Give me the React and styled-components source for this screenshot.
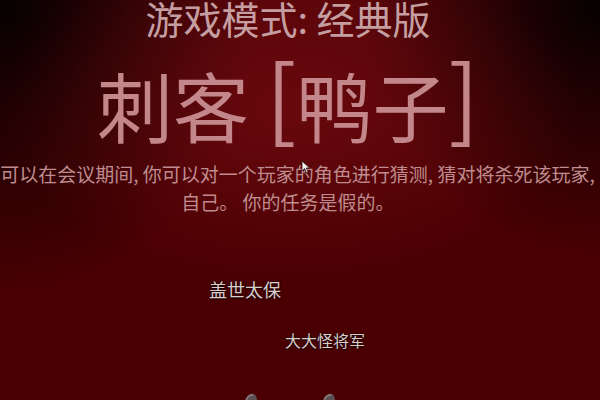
import React from 'react';
import styled, { createGlobalStyle } from 'styled-components';

const GlobalStyle = createGlobalStyle`
  html, body {
    margin: 0;
    padding: 0;
    background: #000;
  }
  body {
    font-family: "Noto Sans CJK SC", "Noto Sans", sans-serif;
  }
`;

const players = [
  { name: '盖世太保', x: 209, y: 279, size: 18 },
  { name: '大大怪将军', x: 285, y: 331, size: 16 },
];

const figures = [
  { x: 244, y: 393 },
  { x: 322, y: 393 },
];

const App = () => {
  return (
    <>
      <GlobalStyle />
      <Screen>
        <Header>
          <ModeTitle>游戏模式: 经典版</ModeTitle>
          <RoleTitle>
            <span>刺客</span>
            <Gap />
            <Bracket>[</Bracket>
            <span>鸭子</span>
            <Bracket>]</Bracket>
          </RoleTitle>
          <Blurb>
            <BlurbLine>你可以在会议期间, 你可以对一个玩家的角色进行猜测, 猜对将杀死该玩家,</BlurbLine>
            <BlurbLine>自己。 你的任务是假的。</BlurbLine>
          </Blurb>
        </Header>

        <Stage>
          {players.map((p) => (
            <NameTag key={p.name} x={p.x} y={p.y} size={p.size}>
              {p.name}
            </NameTag>
          ))}
          {figures.map((f, i) => (
            <Figure key={i} x={f.x} y={f.y} viewBox="0 0 14 8" width="14" height="8">
              <path d="M1 8 C2 3 6 0 10 1 C12 2 13 5 13 8 Z" fill="#5e4f52" />
              <path d="M2 8 C3 4 6 2 9 2" stroke="#8d7e80" strokeWidth="1.4" fill="none" />
            </Figure>
          ))}
        </Stage>

        <Pointer viewBox="0 0 10 14" width="10" height="14">
          <path d="M1 1 L1 11 L3.6 8.6 L5.6 13 L7.2 12.3 L5.2 8 L8.6 8 Z" fill="#f4f0f0" stroke="#2a1a1a" strokeWidth="0.8" />
        </Pointer>
      </Screen>
    </>
  );
};

const Screen = styled.div`
  position: relative;
  width: 600px;
  height: 400px;
  overflow: hidden;
  display: flex;
  flex-direction: column;
  background-color: #4a0003;
  background-image:
    radial-gradient(ellipse 290px 170px at 290px 110px, rgba(125, 14, 20, 0.55), rgba(125, 14, 20, 0) 100%),
    radial-gradient(ellipse 260px 300px at 0 0, rgba(0, 0, 0, 0.95), rgba(0, 0, 0, 0) 100%),
    radial-gradient(ellipse 240px 260px at 600px 0, rgba(0, 0, 0, 0.95), rgba(0, 0, 0, 0) 100%),
    linear-gradient(180deg, #540408 0%, #4a0003 55%);
`;

const Header = styled.div`
  display: flex;
  flex-direction: column;
  align-items: center;
  padding-right: 24px;
`;

const ModeTitle = styled.div`
  margin-top: -1px;
  font-size: 38px;
  line-height: 1;
  color: #c49ea1;
  white-space: nowrap;
`;

const RoleTitle = styled.div`
  display: flex;
  align-items: center;
  margin-top: 22px;
  font-size: 76px;
  line-height: 1;
  color: #c3878b;
  white-space: nowrap;
`;

const Gap = styled.span`
  width: 17px;
`;

/* the bracket glyph sits low in its em box, lift it to the ideograph centre */
const Bracket = styled.span`
  font-size: 90px;
  line-height: 1;
  color: #c3878b;
  transform: translateY(-11px);
`;

const Blurb = styled.div`
  display: flex;
  flex-direction: column;
  align-items: center;
  margin-top: 11px;
`;

const BlurbLine = styled.div`
  font-size: 19px;
  line-height: 28px;
  color: #bf8c8f;
  white-space: nowrap;
`;

const Stage = styled.div`
  position: absolute;
  inset: 0;
  pointer-events: none;
`;

const NameTag = styled.div`
  position: absolute;
  left: ${(p) => p.x}px;
  top: ${(p) => p.y}px;
  font-size: ${(p) => p.size}px;
  line-height: 1.2;
  color: #d6cdcd;
  white-space: nowrap;
  text-shadow: 0 0 2px #1a0000, 1px 1px 1px #1a0000;
`;

const Figure = styled.svg`
  position: absolute;
  left: ${(p) => p.x}px;
  top: ${(p) => p.y}px;
`;

const Pointer = styled.svg`
  position: absolute;
  left: 301px;
  top: 160px;
`;

export default App;
